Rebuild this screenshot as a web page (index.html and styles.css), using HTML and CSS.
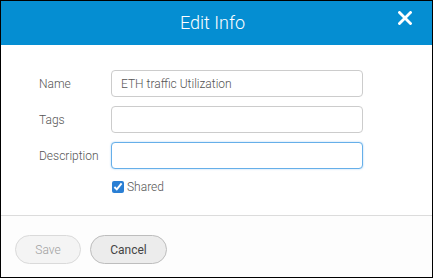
FILE: index.html
```html
<!DOCTYPE html>
<html>
<head>
<meta charset="utf-8">
<link rel="stylesheet" href="styles.css">
</head>
<body>
<div class="modal">
  <div class="header">
    <div class="title">Edit Info</div>
    <svg class="close" width="14" height="14" viewBox="0 0 14 14"><path d="M1.5 1.5 L12.5 12.5 M12.5 1.5 L1.5 12.5" stroke="#fff" stroke-width="2.8" stroke-linecap="square"/></svg>
  </div>
  <div class="content">
    <div class="row"><label>Name</label><input class="field" type="text" value="ETH traffic Utilization"></div>
    <div class="row"><label>Tags</label><input class="field" type="text"></div>
    <div class="row"><label>Description</label><input class="field focus" type="text"></div>
    <div class="check"><input type="checkbox" checked><span>Shared</span></div>
  </div>
  <div class="footer">
    <button class="btn save" disabled>Save</button>
    <button class="btn cancel">Cancel</button>
  </div>
</div>
</body>
</html>
```
FILE: styles.css
```css
html, body { margin: 0; padding: 0; background: #fff; }
.modal {
  width: 433px; height: 278px; box-sizing: border-box;
  border: 1px solid #000;
  display: flex; flex-direction: column;
  font-family: Roboto, "Liberation Sans", sans-serif;
  overflow: hidden;
}
.header {
  height: 44px; background: #058ed2; position: relative;
  display: flex; align-items: center; justify-content: center;
}
.title { color: #fff; font-size: 18px; font-weight: 300; margin-left: -8px; margin-top: -1px; }
.close { position: absolute; right: 20px; top: 10px; }
.content {
  padding: 25px 0 0 38px;
  height: 171px; box-sizing: border-box;
  border-bottom: 1px solid #dcdcdc;
}
.row { display: flex; align-items: center; height: 27px; margin-bottom: 9px; }
.row label { width: 72px; font-size: 12px; color: #555; font-weight: 300; }
.field {
  width: 252px; height: 27px; box-sizing: border-box;
  border: 1px solid #ccc; border-radius: 4px;
  padding: 0 9px; font-family: inherit; font-size: 12px; font-weight: 300; color: #555;
  outline: none; margin: 0;
}
.field.focus { border-color: #66afe9; box-shadow: 0 0 2px rgba(102,175,233,0.6); }
.check { display: flex; align-items: center; margin-left: 72px; margin-top: 11px; font-size: 12px; font-weight: 300; color: #555; }
.check input { width: 12px; height: 12px; margin: 0 3px 0 1px; accent-color: #2a7fd4; }
.footer {
  flex: 1; background: #fdfdfd;
  display: flex; align-items: flex-start; gap: 9px;
  padding: 19px 0 0 14px;
}
.btn {
  height: 29px; border-radius: 15px; font-family: inherit; font-size: 12px; font-weight: 300;
  border: 1px solid #c8c8c8; padding: 0; margin: 0;
}
.save { width: 66px; background: #f4f4f4; color: #a0a0a0; border-color: #dadada; }
.cancel { width: 77px; background: #ececec; color: #444; border-color: #bdbdbd; font-weight: 400; }
```
